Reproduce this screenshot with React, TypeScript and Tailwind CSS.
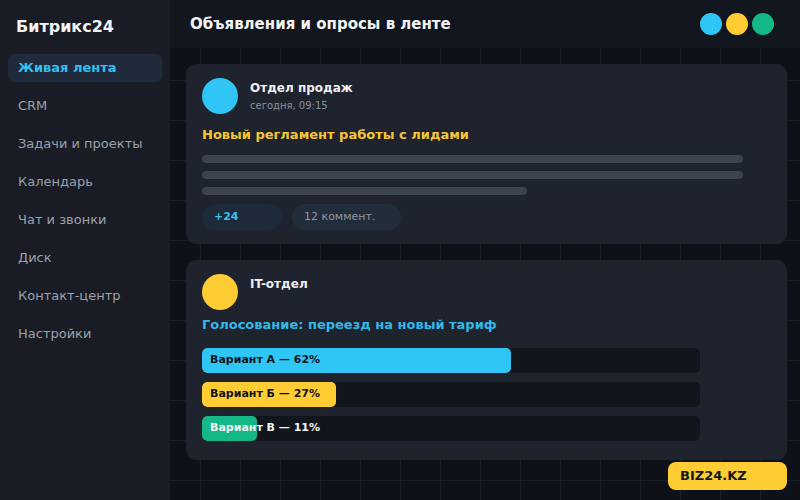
import React from "react";

const nav = [
  "CRM",
  "Задачи и проекты",
  "Календарь",
  "Чат и звонки",
  "Диск",
  "Контакт-центр",
  "Настройки",
];

const poll = [
  { label: "Вариант А — 62%", pct: 62, fill: "bg-[#2fc6f6]", text: "text-[#111418]" },
  { label: "Вариант Б — 27%", pct: 27, fill: "bg-[#ffcd33]", text: "text-[#111418]" },
  { label: "Вариант В — 11%", pct: 11, fill: "bg-[#13b886]", text: "text-[#f3f4f6]" },
];

export default function App() {
  return (
    <div
      className="relative flex h-[500px] w-[800px] overflow-hidden bg-[#0e1117] bg-[linear-gradient(to_right,#1a1e27_1px,transparent_1px),linear-gradient(to_bottom,#1a1e27_1px,transparent_1px)] bg-[size:40px_40px] text-[#e5e7eb]"
      style={{ fontFamily: '"DejaVu Sans", "Noto Sans", sans-serif' }}
    >
      {/* sidebar */}
      <aside className="flex w-[170px] shrink-0 flex-col bg-[#191c24] px-2">
        <div className="pl-2 pt-[17px] text-[16px] font-bold leading-5 text-[#f3f4f6]">Битрикс24</div>
        <div className="mt-[17px] flex h-7 items-center rounded-md bg-[#1f2b3b] pl-[10px] text-[13px] font-bold text-[#35bef0]">
          Живая лента
        </div>
        <div className="mt-[10px] flex flex-col gap-[10px]">
          {nav.map((n) => (
            <div key={n} className="flex h-7 items-center pl-[10px] text-[13px] text-[#9aa1ad]">
              {n}
            </div>
          ))}
        </div>
      </aside>

      {/* main */}
      <div className="flex min-w-0 flex-1 flex-col">
        <header className="flex h-12 shrink-0 items-center justify-between bg-[#12161e] pl-5 pr-[26px]">
          <div className="text-[15px] font-bold text-[#f3f4f6]">Объявления и опросы в ленте</div>
          <div className="flex gap-1">
            <span className="h-[22px] w-[22px] rounded-full bg-[#2fc6f6]" />
            <span className="h-[22px] w-[22px] rounded-full bg-[#ffcd33]" />
            <span className="h-[22px] w-[22px] rounded-full bg-[#13b886]" />
          </div>
        </header>

        <main className="flex flex-col gap-4 pl-4 pr-[13px] pt-4">
          {/* announcement */}
          <section className="h-[180px] rounded-[10px] bg-[#1e232d] px-4 pt-[14px]">
            <div className="flex gap-3">
              <span className="h-9 w-9 shrink-0 rounded-full bg-[#2fc6f6]" />
              <div className="flex flex-col pt-[2px]">
                <span className="text-[12px] font-bold leading-4 text-[#eef0f3]">Отдел продаж</span>
                <span className="mt-[2px] text-[10px] leading-4 text-[#8b919c]">сегодня, 09:15</span>
              </div>
            </div>
            <div className="mt-[11px] text-[13px] font-bold leading-5 text-[#f7c634]">
              Новый регламент работы с лидами
            </div>
            <div className="mt-[10px] flex flex-col gap-2">
              <div className="h-2 w-[541px] rounded-full bg-[#3c424e]" />
              <div className="h-2 w-[541px] rounded-full bg-[#3c424e]" />
              <div className="h-2 w-[325px] rounded-full bg-[#3c424e]" />
            </div>
            <div className="mt-[9px] flex gap-[10px]">
              <span className="flex h-[26px] w-20 items-center rounded-full bg-[#1d2a39] pl-3 text-[11px] font-bold text-[#38bff0]">
                +24
              </span>
              <span className="flex h-[26px] w-[109px] items-center rounded-full bg-[#222d3b] pl-3 text-[11px] text-[#8e96a2]">
                12 коммент.
              </span>
            </div>
          </section>

          {/* poll */}
          <section className="h-[200px] rounded-[10px] bg-[#1e232d] px-4 pt-[14px]">
            <div className="flex gap-3">
              <span className="h-9 w-9 shrink-0 rounded-full bg-[#ffcd33]" />
              <span className="pt-[2px] text-[12px] font-bold leading-4 text-[#eef0f3]">IT-отдел</span>
            </div>
            <div className="mt-[5px] text-[13px] font-bold leading-5 text-[#33b9ea]">
              Голосование: переезд на новый тариф
            </div>
            <div className="mt-[13px] flex flex-col gap-[9px]">
              {poll.map((p) => (
                <div key={p.label} className="relative h-[25px] w-[498px] overflow-hidden rounded-[5px] bg-[#11151c]">
                  <div className={`h-full rounded-[5px] ${p.fill}`} style={{ width: `${p.pct}%` }} />
                  <span className={`absolute left-2 top-0 flex h-full items-center text-[11px] font-bold ${p.text}`}>
                    {p.label}
                  </span>
                </div>
              ))}
            </div>
          </section>
        </main>
      </div>

      <div className="absolute bottom-[10px] right-[13px] flex h-[28px] w-[119px] items-center rounded-lg bg-[#ffcd33] pl-3 text-[13px] font-bold text-[#16181d]">
        BIZ24.KZ
      </div>
    </div>
  );
}
